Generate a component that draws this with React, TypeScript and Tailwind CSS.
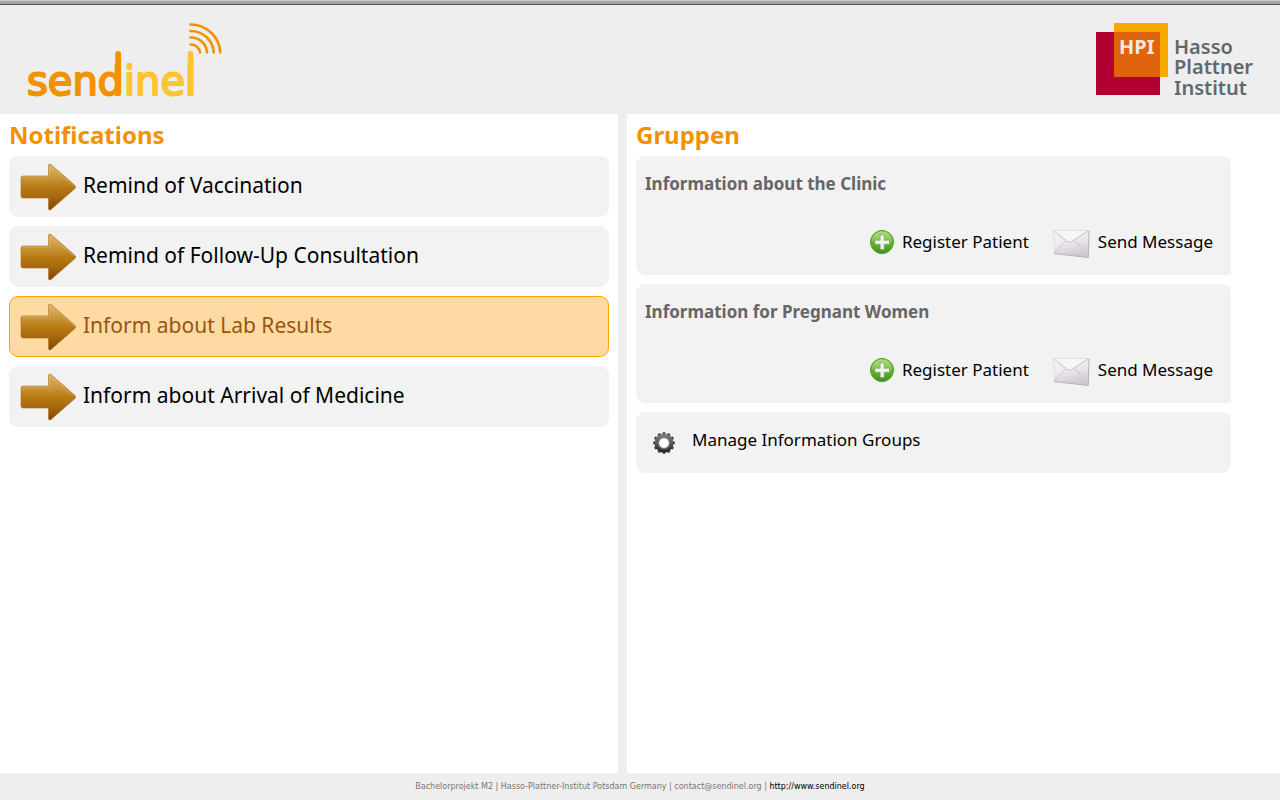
import React from "react";

const notifications = [
  { label: "Remind of Vaccination", href: "#vaccination" },
  { label: "Remind of Follow-Up Consultation", href: "#follow-up" },
  { label: "Inform about Lab Results", href: "#lab-results", active: true },
  { label: "Inform about Arrival of Medicine", href: "#medicine" },
];

const groups = ["Information about the Clinic", "Information for Pregnant Women"];

function SendinelLogo() {
  return (
    <svg width="204" height="88" viewBox="0 0 204 88" role="img" aria-label="sendinel">
      <g
        fontFamily="'DejaVu Sans', Verdana, sans-serif"
        fontSize="40"
        strokeWidth="2"
        strokeLinejoin="round"
      >
        <text x="1" y="73" fill="#f39200" stroke="#f39200">
          send
        </text>
        <text x="98" y="73" fill="#ffc531" stroke="#ffc531">
          inel
        </text>
      </g>
      <g fill="none" strokeLinecap="round">
        <path d="M92.200 32V71" stroke="#f39200" strokeWidth="5.8" />
        <path d="M164.600 32V71" stroke="#ffc531" strokeWidth="5.8" />
        <g stroke="#f39200" strokeWidth="2.6">
          <path d="M164.500 22.500A9 8.500 0 0 1 174 30.500" />
          <path d="M164.500 15.500A16 15.500 0 0 1 181 30.500" />
          <path d="M164.500 9A23 22.200 0 0 1 187.700 30.500" />
          <path d="M164.500 2.500A30 29 0 0 1 194.300 30.500" />
        </g>
      </g>
    </svg>
  );
}

function HpiLogo() {
  return (
    <svg width="160" height="84" viewBox="0 0 160 84" role="img" aria-label="HPI Hasso Plattner Institut">
      <rect x="0" y="10" width="64" height="63" fill="#b00034" />
      <rect x="18" y="1" width="54" height="54" fill="#f9a800" />
      <rect x="18" y="10" width="46" height="45" fill="#dd640c" />
      <g fontFamily="'Noto Sans', sans-serif">
        <text x="23" y="32" fontSize="20" fontWeight="700" fill="#f3e9e0">
          HPI
        </text>
        <g fontSize="20" fontWeight="600" fill="#5f696c">
          <text x="78" y="32">Hasso</text>
          <text x="78" y="52">Plattner</text>
          <text x="78" y="73">Institut</text>
        </g>
      </g>
    </svg>
  );
}

function ArrowIcon() {
  return (
    <svg width="57" height="48" viewBox="0 0 57 48" className="shrink-0" aria-hidden="true">
      <defs>
        <linearGradient id="arrow-fill" x1="0" y1="0" x2="0" y2="1">
          <stop offset="0" stopColor="#deb566" />
          <stop offset="0.3" stopColor="#c8963a" />
          <stop offset="0.5" stopColor="#b97a14" />
          <stop offset="0.7" stopColor="#a8690f" />
          <stop offset="1" stopColor="#844506" />
        </linearGradient>
      </defs>
      <path
        d="M3 13H28.500V3Q28.500 0 31 1.500L55 22.500Q56.500 24 55 25.500L31 46.500Q28.500 48 28.500 45V35H3Q1 35 1 33V15Q1 13 3 13Z"
        fill="url(#arrow-fill)"
        stroke="#a87325"
        strokeOpacity="0.6"
      />
      <path d="M2.500 14H29.500V3L54 23" fill="none" stroke="#e6c07a" strokeOpacity="0.5" />
    </svg>
  );
}

function PlusIcon() {
  return (
    <svg width="24" height="24" viewBox="0 0 24 24" className="shrink-0" aria-hidden="true">
      <defs>
        <linearGradient id="plus-fill" x1="0" y1="0" x2="0" y2="1">
          <stop offset="0" stopColor="#a6d66c" />
          <stop offset="0.5" stopColor="#69b536" />
          <stop offset="1" stopColor="#3f9418" />
        </linearGradient>
      </defs>
      <circle cx="12" cy="12" r="11.500" fill="url(#plus-fill)" stroke="#4a9c28" />
      <path d="M2 11A10 9.500 0 0 1 22 11Q12 15 2 11Z" fill="#fff" opacity="0.15" />
      <path d="M10.200 5H14.200V10.300H19.500V14.300H14.200V19.500H10.200V14.300H5V10.300H10.200Z" fill="#f2f4f0" stroke="#5ba638" strokeWidth="0.5" />
    </svg>
  );
}

function EnvelopeIcon() {
  return (
    <svg width="37" height="34" viewBox="0 -4 37 34" className="shrink-0" aria-hidden="true">
      <defs>
        <linearGradient id="envelope-fill" x1="0" y1="0" x2="0.300" y2="1">
          <stop offset="0" stopColor="#fbfafa" />
          <stop offset="0.6" stopColor="#e9e4e8" />
          <stop offset="1" stopColor="#cec8d4" />
        </linearGradient>
      </defs>
      <path d="M0.500 1.500H36L35.300 28.500L1.500 24.500Z" fill="url(#envelope-fill)" stroke="#dedade" strokeWidth="0.8" />
      <path d="M1.500 24.500L35.300 28.500L36 2" fill="none" stroke="#b3adbb" strokeWidth="0.9" />
      <path d="M1.500 24L13 11.500M35 28L22 11.500" fill="none" stroke="#cbc5ca" />
      <path d="M1 2L14 12.500Q16 14 18.500 12.500L35.500 2Z" fill="#f7f6f5" />
      <path d="M1 2L14 12.500Q16 14 18.500 12.500L35.500 2" fill="none" stroke="#c6c0c0" />
    </svg>
  );
}

function GearIcon() {
  const teeth = [0, 30, 60, 90, 120, 150, 180, 210, 240, 270, 300, 330];
  return (
    <svg width="24" height="24" viewBox="0 0 24 24" className="shrink-0" aria-hidden="true">
      <defs>
        <linearGradient id="gear-fill" gradientUnits="userSpaceOnUse" x1="0" y1="1" x2="0" y2="23">
          <stop offset="0" stopColor="#8c8c8c" />
          <stop offset="0.5" stopColor="#555" />
          <stop offset="1" stopColor="#1c1c1c" />
        </linearGradient>
        <radialGradient id="gear-hub">
          <stop offset="0.8" stopColor="#fff" />
          <stop offset="1" stopColor="#bbb" />
        </radialGradient>
      </defs>
      <g stroke="#454545" strokeWidth="3.4" strokeLinecap="round">
        {teeth.map((angle) => (
          <path key={angle} d="M12 2.700V5" transform={`rotate(${angle} 12 12)`} />
        ))}
      </g>
      <circle cx="12" cy="12" r="9.400" fill="url(#gear-fill)" />
      <circle cx="12" cy="12" r="6" fill="none" stroke="#777" />
      <circle cx="12" cy="12" r="5.200" fill="url(#gear-hub)" />
    </svg>
  );
}

export default function App() {
  return (
    <div className="flex min-h-screen flex-col bg-[#eeeeee] font-['Noto_Sans',sans-serif] text-black">
      <div className="h-[5px] border-t border-b border-t-[#cccccc] border-b-[#555555] bg-[#a3a3a3]" />
      <header className="flex h-[109px] items-start justify-between pt-[17px] pr-6 pl-[26px]">
        <a href="#home">
          <SendinelLogo />
        </a>
        <a href="#hpi">
          <HpiLogo />
        </a>
      </header>

      <main className="grid flex-1 grid-cols-[618fr_653fr] gap-[9px]">
        <section className="bg-white px-[9px] pt-1">
          <h1 className="h-[38px] text-2xl leading-[34px] font-bold text-[#f39200]">Notifications</h1>
          <nav className="flex flex-col gap-[9px]">
            {notifications.map((item) => (
              <a
                key={item.href}
                href={item.href}
                className={
                  item.active
                    ? "flex h-[61px] items-center gap-[6px] rounded-[9px] border border-[#ffa500] bg-[#ffdaa3] px-[10px] text-[21px] text-[#995511]"
                    : "flex h-[61px] items-center gap-[6px] rounded-[9px] border border-[#f2f2f2] bg-[#f2f2f2] px-[10px] text-[21px]"
                }
              >
                <ArrowIcon />
                <span className="pb-0.5">{item.label}</span>
              </a>
            ))}
          </nav>
        </section>

        <section className="bg-white pt-1 pr-[49px] pl-[9px]">
          <h1 className="h-[38px] text-2xl leading-[34px] font-bold text-[#f39200]">Gruppen</h1>
          <div className="flex flex-col gap-[9px]">
            {groups.map((group) => (
              <article
                key={group}
                className="flex h-[119px] flex-col justify-between rounded-[9px] rounded-br-[2px] bg-[#f2f2f2] px-[9px] pt-4 pb-4"
              >
                <h2 className="text-[17px] leading-6 font-bold text-[#666666]">{group}</h2>
                <div className="flex justify-end gap-6 pr-[9px] text-[17px]">
                  <a href="#register" className="flex items-center gap-2">
                    <PlusIcon />
                    Register Patient
                  </a>
                  <a href="#send" className="flex items-center gap-2">
                    <EnvelopeIcon />
                    Send Message
                  </a>
                </div>
              </article>
            ))}
            <a
              href="#manage"
              className="flex h-[61px] items-center gap-4 rounded-[9px] bg-[#f2f2f2] px-4 text-[17px]"
            >
              <GearIcon />
              <span className="pb-1.5">Manage Information Groups</span>
            </a>
          </div>
        </section>
      </main>

      <footer className="h-[27px] text-center font-['DejaVu_Sans',sans-serif] text-[8px] leading-[27px] text-[#777777]">
        Bachelorprojekt M2 | Hasso-Plattner-Institut Potsdam Germany | contact@sendinel.org |{" "}
        <a href="http://www.sendinel.org" className="text-black">
          http://www.sendinel.org
        </a>
      </footer>
    </div>
  );
}
